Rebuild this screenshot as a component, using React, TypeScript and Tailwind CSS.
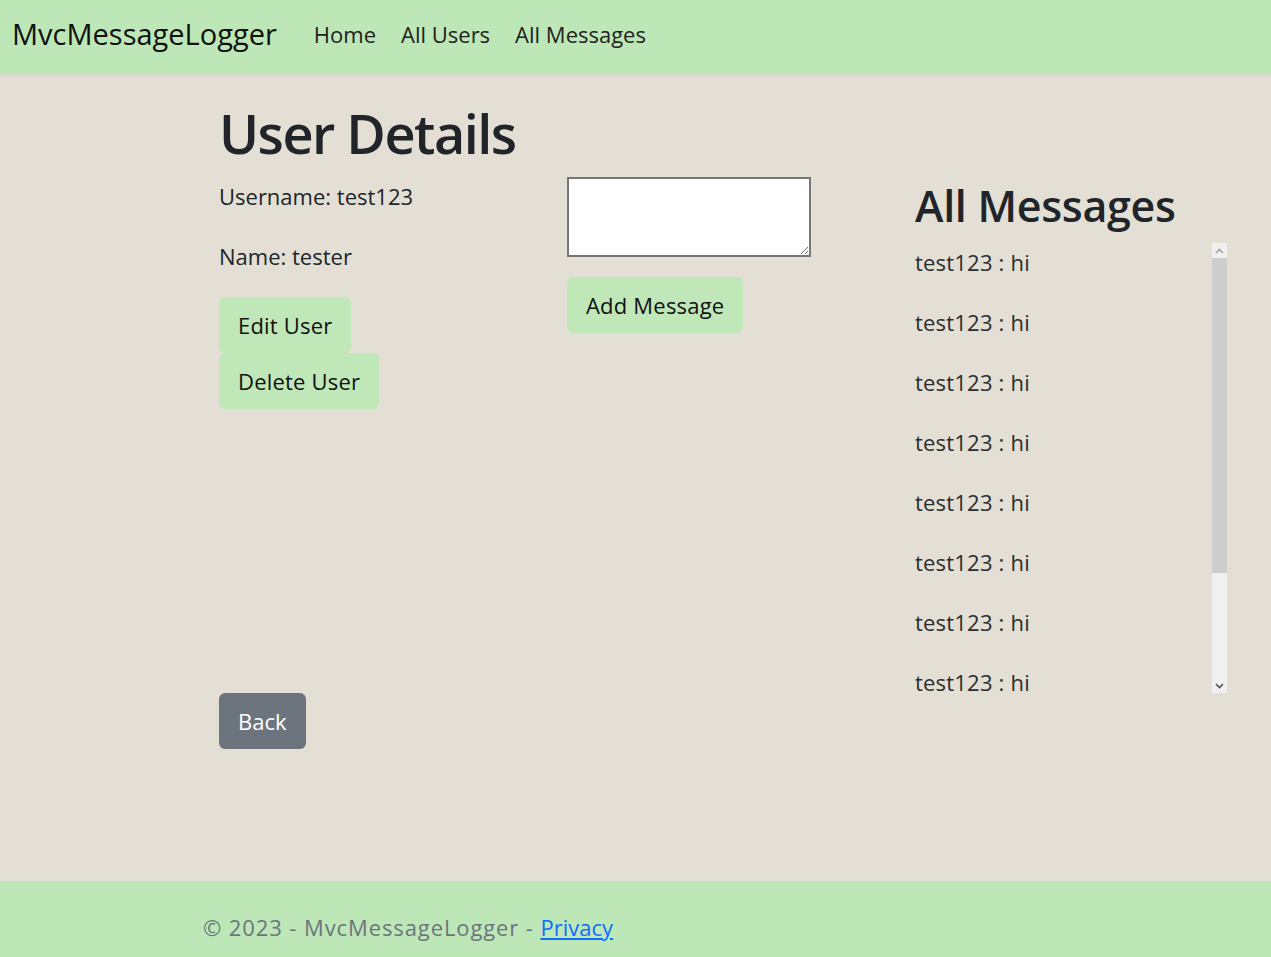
import React from 'react';

const messages = Array.from({ length: 8 }, () => ({ user: 'test123', text: 'hi' }));

const greenBtn = 'rounded-[6px] bg-[#bfe7b8] px-[19px] h-[56px] text-[22px] text-[#111] leading-none tracking-[0.2px]';

// Windows-style scrollbar drawn next to the message list
const FakeScrollbar: React.FC = () => (
  <div className="flex h-[450px] w-[15px] flex-col bg-[#f0f0f0]">
    <div className="flex h-[15px] items-center justify-center">
      <svg width="9" height="6" viewBox="0 0 9 6">
        <path d="M1 5 L4.5 1.5 L8 5" fill="none" stroke="#a3a3a3" strokeWidth="1.6" />
      </svg>
    </div>
    <div className="h-[315px] bg-[#cdcdcd]" />
    <div className="flex-1" />
    <div className="flex h-[15px] items-center justify-center">
      <svg width="9" height="6" viewBox="0 0 9 6">
        <path d="M1 1 L4.5 4.5 L8 1" fill="none" stroke="#505050" strokeWidth="1.6" />
      </svg>
    </div>
  </div>
);

const App: React.FC = () => {
  return (
    <div className="flex min-h-[957px] flex-col bg-[#e3dfd5] text-[#212529] [font-family:'Open_Sans','Noto_Sans',sans-serif]">
      {/* Navbar */}
      <nav className="flex h-[74px] items-center border-b border-[#d4d9cf] bg-[#bde7b6] px-[12px] pb-[5px] shadow-[0_1px_4px_rgba(0,0,0,0.06)]">
        <a className="mr-[37px] text-[29px] text-[#111]">MvcMessageLogger</a>
        <div className="flex gap-[25px] text-[22px] text-[#222]">
          <a>Home</a>
          <a>All Users</a>
          <a>All Messages</a>
        </div>
      </nav>

      {/* Main */}
      <main className="flex-1 pl-[219px] pt-[26px]">
        <div className="grid grid-cols-[348px_348px_348px]">
          <div className="flex flex-col">
            <h1 className="text-[54px] font-semibold leading-[66px] tracking-[-1.5px]">User Details</h1>
            <p className="mt-[14px] text-[22px] leading-[33px]">Username: test123</p>
            <p className="mt-[27px] text-[22px] leading-[33px]">Name: tester</p>
            <div className="mt-[24px] flex flex-col items-start">
              <button className={greenBtn}>Edit User</button>
              <button className={greenBtn}>Delete User</button>
            </div>
            <div className="mt-[284px]">
              <button className="h-[56px] rounded-[6px] bg-[#6c757d] px-[19px] text-[22px] text-white">Back</button>
            </div>
          </div>

          <div className="flex flex-col items-start pt-[77px]">
            <textarea className="h-[80px] w-[244px] border-2 border-[#767676] bg-white" />
            <button className={`${greenBtn} mt-[20px]`}>Add Message</button>
          </div>

          <div className="flex flex-col pt-[79px]">
            <h2 className="text-[43px] font-semibold leading-[53px] tracking-[-0.3px]">All Messages</h2>
            <div className="mt-[11px] flex w-[312px]">
              <div className="h-[450px] flex-1">
                {messages.map((m, i) => (
                  <p
                    key={i}
                    className={`${i === messages.length - 1 ? 'pt-[9px] leading-[20px]' : 'h-[60px] pt-[3px] leading-[33px]'} text-[22px] tracking-[0.2px] text-[#2b2e31]`}
                  >
                    {m.user} : {m.text}
                  </p>
                ))}
              </div>
              <FakeScrollbar />
            </div>
          </div>
        </div>
      </main>

      {/* Footer */}
      <footer className="flex h-[76px] items-center bg-[#bde7b6] pl-[203px] pt-[16px] text-[22px] text-[#6c757d]">
        <span className="tracking-[0.9px]">
          © 2023 - MvcMessageLogger - <a className="tracking-normal text-[#0d6efd] underline">Privacy</a>
        </span>
      </footer>
    </div>
  );
};

export default App;
